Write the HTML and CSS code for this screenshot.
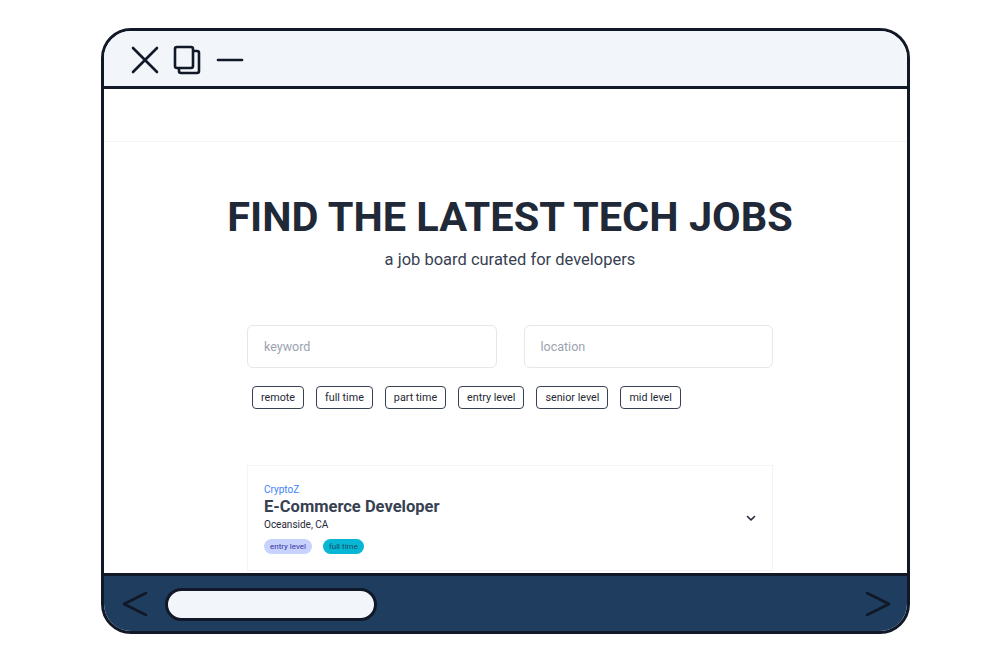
FILE: index.html
```html
<!DOCTYPE html>
<html>
<head>
<meta charset="utf-8">
<link rel="stylesheet" href="styles.css">
</head>
<body>
<div class="window">
  <div class="topbar">
    <svg class="ico" width="28" height="28" viewBox="0 0 28 28"><path d="M2 2 L26 26 M26 2 L2 26" stroke="#111827" stroke-width="2.6" stroke-linecap="round" fill="none"/></svg>
    <svg class="ico" width="28" height="30" viewBox="0 0 28 30"><rect x="6" y="6" width="20" height="22" rx="2" fill="none" stroke="#111827" stroke-width="2.6"/><rect x="2" y="2" width="18" height="21" rx="2" fill="#f2f5fa" stroke="#111827" stroke-width="2.6"/></svg>
    <svg class="ico minus" width="28" height="28" viewBox="0 0 28 28"><path d="M2 14 L26 14" stroke="#111827" stroke-width="2.6" stroke-linecap="round"/></svg>
  </div>
  <div class="content">
    <div class="pagehead"></div>
    <div class="hero">
      <h1 class="title">FIND THE LATEST TECH JOBS</h1>
      <p class="subtitle">a job board curated for developers</p>
    </div>
    <div class="search">
      <div class="inputs">
        <div class="field">keyword</div>
        <div class="field">location</div>
      </div>
      <div class="filters">
        <span class="filter">remote</span>
        <span class="filter">full time</span>
        <span class="filter">part time</span>
        <span class="filter">entry level</span>
        <span class="filter">senior level</span>
        <span class="filter">mid level</span>
      </div>
    </div>
    <div class="card">
      <div class="card-main">
        <div class="company">CryptoZ</div>
        <div class="job">E-Commerce Developer</div>
        <div class="place">Oceanside, CA</div>
        <div class="badges">
          <span class="badge entry">entry level</span>
          <span class="badge full">full time</span>
        </div>
      </div>
      <svg class="chev" width="10" height="7" viewBox="0 0 10 7"><path d="M1.5 1.5 L5 5 L8.5 1.5" stroke="#1f2937" stroke-width="1.6" fill="none" stroke-linecap="round" stroke-linejoin="round"/></svg>
    </div>
  </div>
  <div class="bottombar">
    <svg class="nav" width="26" height="26" viewBox="0 0 26 26"><path d="M24 2 L2 13 L24 24" stroke="#111827" stroke-width="2.6" fill="none" stroke-linecap="round" stroke-linejoin="round"/></svg>
    <div class="urlbar"></div>
    <div class="spacer"></div>
    <svg class="nav" width="26" height="26" viewBox="0 0 26 26"><path d="M2 2 L24 13 L2 24" stroke="#111827" stroke-width="2.6" fill="none" stroke-linecap="round" stroke-linejoin="round"/></svg>
  </div>
</div>
</body>
</html>
```
FILE: styles.css
```css
* { box-sizing: border-box; }
html, body { margin: 0; background: #ffffff; }
body {
  padding: 28px 0 0 101px;
  font-family: Roboto, "Liberation Sans", sans-serif;
}
.window {
  width: 809px;
  height: 606px;
  border: 3px solid #111827;
  border-radius: 30px;
  overflow: hidden;
  display: flex;
  flex-direction: column;
  background: #fff;
}
.topbar {
  height: 58px;
  flex: none;
  background: #f2f5fa;
  border-bottom: 3px solid #111827;
  display: flex;
  align-items: center;
  padding: 3px 0 0 27px;
  gap: 14px;
}
.topbar .minus { margin-left: 1px; }
.content {
  flex: 1;
  overflow: hidden;
  background: #fff;
  padding-left: 9px;
}
.pagehead {
  height: 53px;
  margin-left: -9px;
  border-bottom: 1px solid #f3f4f6;
}
.hero { text-align: center; }
.title {
  margin: 50px 0 0;
  font-size: 41.5px;
  line-height: 50px;
  font-weight: 700;
  color: #1f2937;
}
.subtitle {
  margin: 6px 0 0;
  font-size: 16.5px;
  line-height: 24px;
  color: #374151;
}
.search {
  width: 526px;
  margin: 53px auto 0;
}
.inputs {
  display: flex;
  gap: 27px;
}
.field {
  flex: 1;
  height: 43px;
  border: 1px solid #e5e7eb;
  border-radius: 6px;
  padding: 0 16px;
  display: flex;
  align-items: center;
  font-size: 12.5px;
  color: #9ca3af;
}
.filters {
  display: flex;
  gap: 12px;
  margin: 18px 0 0 5px;
}
.filter {
  height: 23px;
  padding: 0 8px;
  border: 1.5px solid #374151;
  border-radius: 4px;
  display: flex;
  align-items: center;
  font-size: 10.75px;
  color: #1f2937;
}
.card {
  width: 526px;
  margin: 56px auto 0;
  border: 1px solid #f3f4f6;
  padding: 17px 16px 16px;
  display: flex;
  align-items: center;
}
.card-main { flex: 1; }
.company {
  font-size: 10px;
  line-height: 13px;
  color: #3b82f6;
}
.job {
  font-size: 16.5px;
  line-height: 22px;
  font-weight: 700;
  color: #374151;
}
.place {
  font-size: 10px;
  line-height: 14px;
  color: #1f2937;
}
.badges {
  display: flex;
  gap: 11px;
  margin-top: 7px;
}
.badge {
  height: 15px;
  padding: 0 6px;
  border-radius: 8px;
  font-size: 8px;
  display: flex;
  align-items: center;
}
.badge.entry { background: #c7d2fe; color: #3730a3; }
.badge.full { background: #06b6d4; color: #164e63; }
.chev { margin-right: 0; }
.bottombar {
  height: 58px;
  flex: none;
  background: #1e3d5f;
  border-top: 3px solid #111827;
  display: flex;
  align-items: center;
  padding: 0 16px 0 18px;
}
.urlbar {
  width: 212px;
  height: 33px;
  margin-left: 17px;
  margin-top: 2px;
  background: #f2f5fa;
  border: 3px solid #111827;
  border-radius: 17px;
}
.spacer { flex: 1; }
```
